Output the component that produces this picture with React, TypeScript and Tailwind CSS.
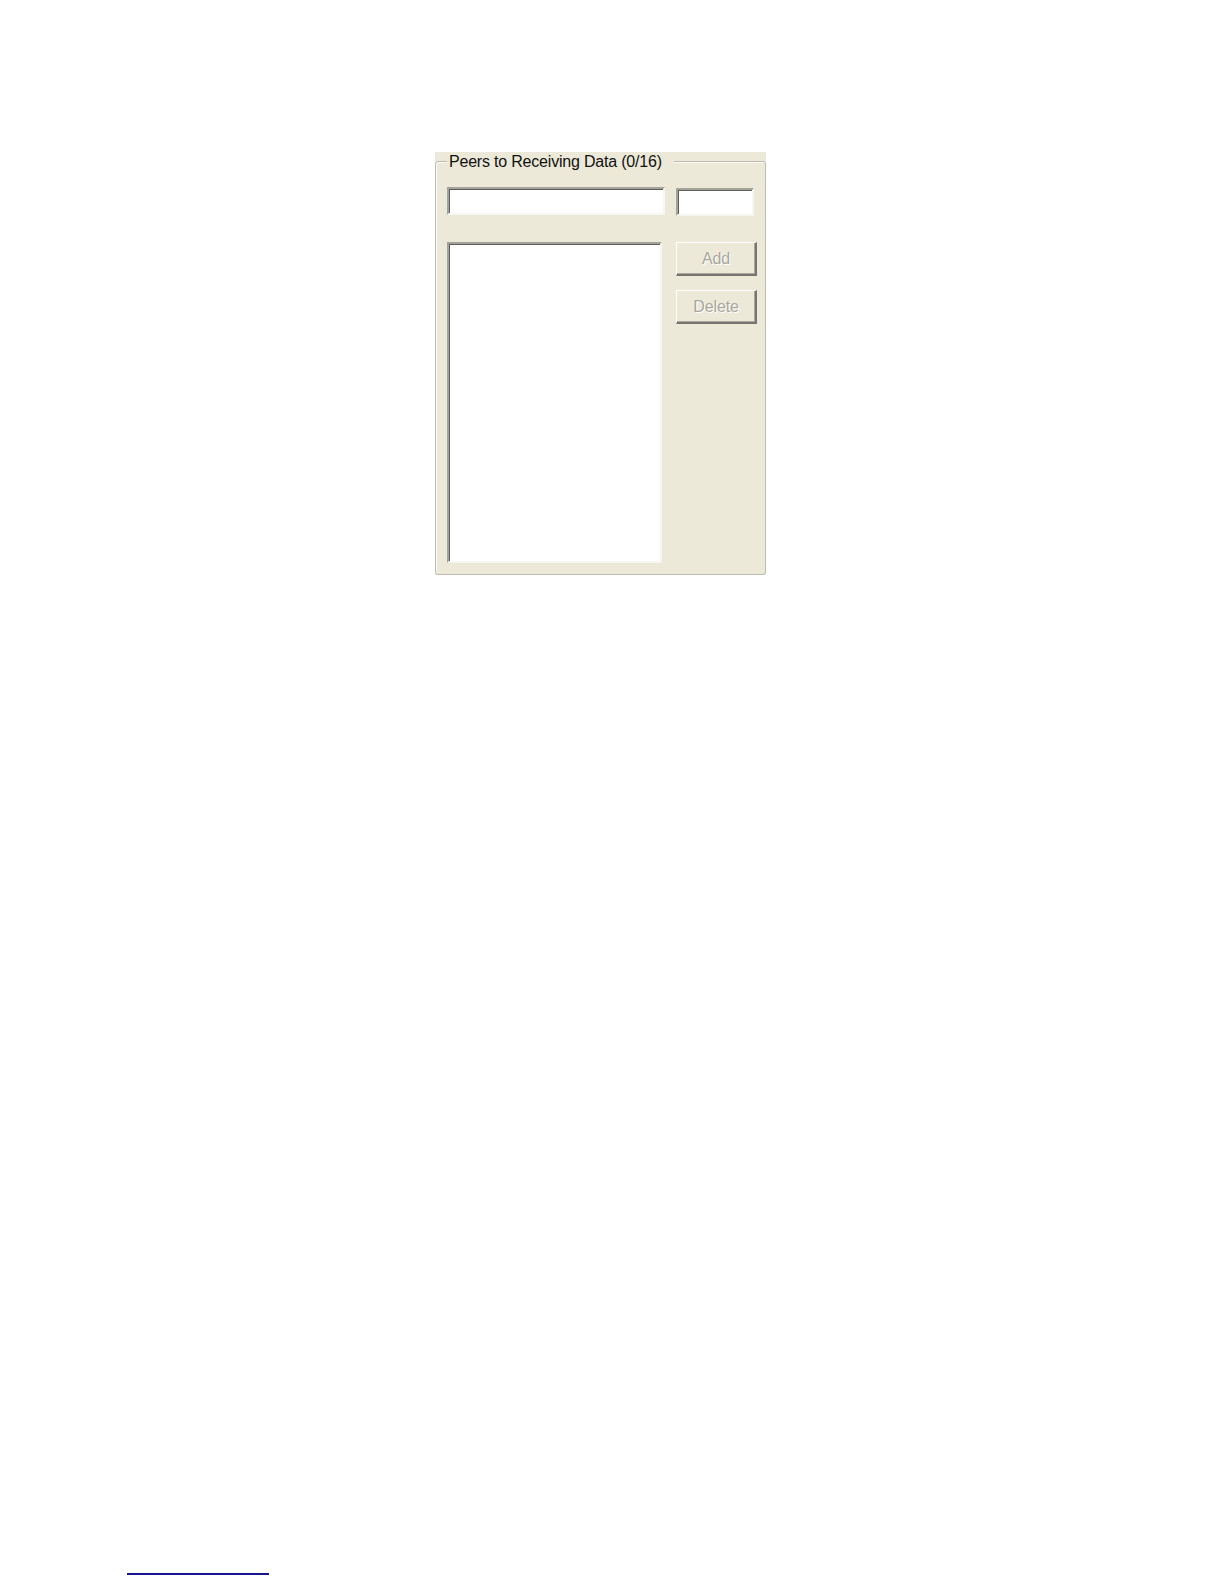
import React from "react";

const font = { fontFamily: '"Liberation Sans", Arial, sans-serif' };

const sunken =
    "bg-white border-t-2 border-l-2 border-r-2 border-b-2 border-t-[#a4a39b] border-l-[#a4a39b] border-r-[#f7f6f1] border-b-[#f7f6f1] shadow-[inset_1px_1px_0_#5e5d59]";

function XpButton({ label }: { label: string }) {
    return (
        <button
            disabled
            className="w-[81px] h-[34px] flex items-center justify-center bg-[#ece9d8] border-t-[1.5px] border-l-[1.5px] border-r-2 border-b-2 border-t-white border-l-white border-r-[#76756f] border-b-[#76756f] shadow-[inset_-1px_-1px_0_#aca899] text-[16px] tracking-[-0.1px] text-[#a9a79d] [text-shadow:1px_1px_0_#fff]"
        >
            {label}
        </button>
    );
}

export default function App() {
    return (
        <div className="min-h-[1584px] bg-white flex flex-col" style={font}>
            <div className="mt-[152px] ml-[435px] w-[331px] bg-[#ece9d8] pt-[9px]">
                <div className="border border-[#bdbbad] rounded-[3px] shadow-[inset_1px_1px_0_#fbfaf5] pb-[11px]">
                    <div className="-mt-[9px] ml-[11px] w-fit bg-[#ece9d8] pl-[2px] pr-[12px] leading-[18px] text-[16px] tracking-[-0.2px] text-[#111]">
                        Peers to Receiving Data (0/16)
                    </div>

                    <div className="mt-[16px] ml-[11px] flex items-start gap-[11px]">
                        <div className={`w-[218px] h-[28px] ${sunken}`} />
                        <div className={`mt-[1px] w-[78px] h-[28px] ${sunken}`} />
                    </div>

                    <div className="mt-[26px] ml-[11px] flex items-start gap-[14px]">
                        <div className={`w-[215px] h-[321px] ${sunken}`} />
                        <div className="flex flex-col gap-[14px]">
                            <XpButton label="Add" />
                            <XpButton label="Delete" />
                        </div>
                    </div>
                </div>
            </div>

            <div className="mt-[998px] ml-[127px] w-[142px] h-[1.5px] bg-[#161690]" />
        </div>
    );
}
